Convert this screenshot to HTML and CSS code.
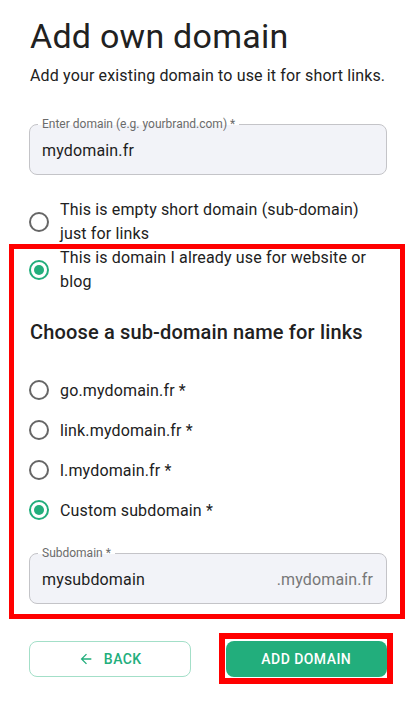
FILE: index.html
```html
<!DOCTYPE html>
<html>
<head>
<meta charset="utf-8">
<link rel="stylesheet" href="styles.css">
</head>
<body>
<main class="page">
  <h1 class="title">Add own domain</h1>
  <p class="subtitle">Add your existing domain to use it for short links.</p>

  <div class="field field-domain">
    <span class="field-label">Enter domain (e.g. yourbrand.com) *</span>
    <span class="field-value">mydomain.fr</span>
  </div>

  <div class="radio-row radio-first">
    <span class="radio"></span>
    <span class="radio-text">This is empty short domain (sub-domain) just for links</span>
  </div>

  <section class="highlight">
    <div class="radio-row">
      <span class="radio checked"></span>
      <span class="radio-text">This is domain I already use for website or blog</span>
    </div>

    <h2 class="heading">Choose a sub-domain name for links</h2>

    <div class="options">
      <div class="option"><span class="radio"></span><span class="radio-text">go.mydomain.fr *</span></div>
      <div class="option"><span class="radio"></span><span class="radio-text">link.mydomain.fr *</span></div>
      <div class="option"><span class="radio"></span><span class="radio-text">l.mydomain.fr *</span></div>
      <div class="option"><span class="radio checked"></span><span class="radio-text">Custom subdomain *</span></div>
    </div>

    <div class="field field-sub">
      <span class="field-label">Subdomain *</span>
      <span class="field-value">mysubdomain</span>
      <span class="field-suffix">.mydomain.fr</span>
    </div>
  </section>

  <div class="actions">
    <button class="btn btn-back">
      <svg class="arrow" width="16" height="16" viewBox="0 0 24 24"><path d="M20 11H7.83l5.59-5.59L12 4l-8 8 8 8 1.41-1.41L7.83 13H20v-2z" fill="currentColor"/></svg>
      BACK
    </button>
    <div class="btn-wrap">
      <button class="btn btn-add">ADD DOMAIN</button>
    </div>
  </div>
</main>
</body>
</html>
```

FILE: styles.css
```css
* { box-sizing: border-box; }
html, body { margin: 0; padding: 0; background: #fff; }
body {
  font-family: Roboto, "Noto Sans", "Liberation Sans", sans-serif;
  color: #212121;
  letter-spacing: 0.15px;
}
.page {
  width: 412px;
  padding: 16px 25px 20px 29px;
}
.title {
  margin: 0;
  font-size: 34px;
  line-height: 40px;
  font-weight: 400;
  letter-spacing: 0.25px;
  padding-left: 1px;
}
.subtitle {
  margin: 8px 0 0;
  font-size: 16px;
  line-height: 24px;
  padding-left: 1px;
}
.field {
  position: relative;
  height: 51px;
  border: 1px solid #c4c4c8;
  border-radius: 8px;
  background: #f2f3f8;
  display: flex;
  align-items: center;
  padding: 0 13px 0 12px;
  font-size: 16px;
}
.field-domain { margin-top: 36px; }
.field-label {
  position: absolute;
  top: -8px;
  left: 8px;
  padding: 0 4px;
  font-size: 12px;
  line-height: 14px;
  color: #6b6b6b;
  letter-spacing: 0;
  background: linear-gradient(#fff 0 8px, transparent 8px);
}
.field-value { flex: 1; padding-top: 2px; color: #1d1d1d; }
.field-suffix { color: #777; padding-top: 2px; }

.radio-row {
  display: flex;
  align-items: center;
  gap: 11px;
  font-size: 16px;
  line-height: 24px;
}
.radio-first { margin-top: 23px; }
.radio {
  flex: none;
  width: 20px;
  height: 20px;
  border: 2px solid #666;
  border-radius: 50%;
  position: relative;
}
.radio.checked { border-color: #22ae7c; }
.radio.checked::after {
  content: "";
  position: absolute;
  left: 3px; top: 3px;
  width: 10px; height: 10px;
  border-radius: 50%;
  background: #22ae7c;
}
.radio-text { padding-right: 20px; }

.highlight { position: relative; }
.highlight::before {
  content: "";
  position: absolute;
  top: -2px; left: -20px; right: -18px; bottom: -15px;
  border: 5px solid #ff0000;
  pointer-events: none;
}
.heading {
  margin: 24px 0 0;
  font-size: 20px;
  line-height: 28px;
  font-weight: 500;
  padding-left: 1px;
}
.options {
  margin-top: 24px;
  display: flex;
  flex-direction: column;
}
.option {
  height: 40px;
  display: flex;
  align-items: center;
  gap: 11px;
  font-size: 16px;
}
.field-sub { margin-top: 23px; }

.actions {
  margin-top: 37px;
  display: grid;
  grid-template-columns: 1fr 1fr;
  gap: 35px;
}
.btn {
  font-family: inherit;
  font-size: 14px;
  font-weight: 500;
  letter-spacing: 0.45px;
  height: 36px;
  border-radius: 8px;
  cursor: pointer;
  display: flex;
  align-items: center;
  justify-content: center;
  width: 100%;
  padding: 0;
}
.btn-back {
  background: #fff;
  border: 1px solid #a3dfc8;
  color: #22ae7c;
  gap: 10px;
}
.btn-wrap {
  position: relative;
}
.btn-wrap::before {
  content: "";
  position: absolute;
  top: -8px; left: -7px; right: -6px; bottom: -7px;
  border: 6px solid #ff0000;
  pointer-events: none;
}
.btn-add {
  background: #22ae7c;
  border: none;
  color: #fff;
}
```
